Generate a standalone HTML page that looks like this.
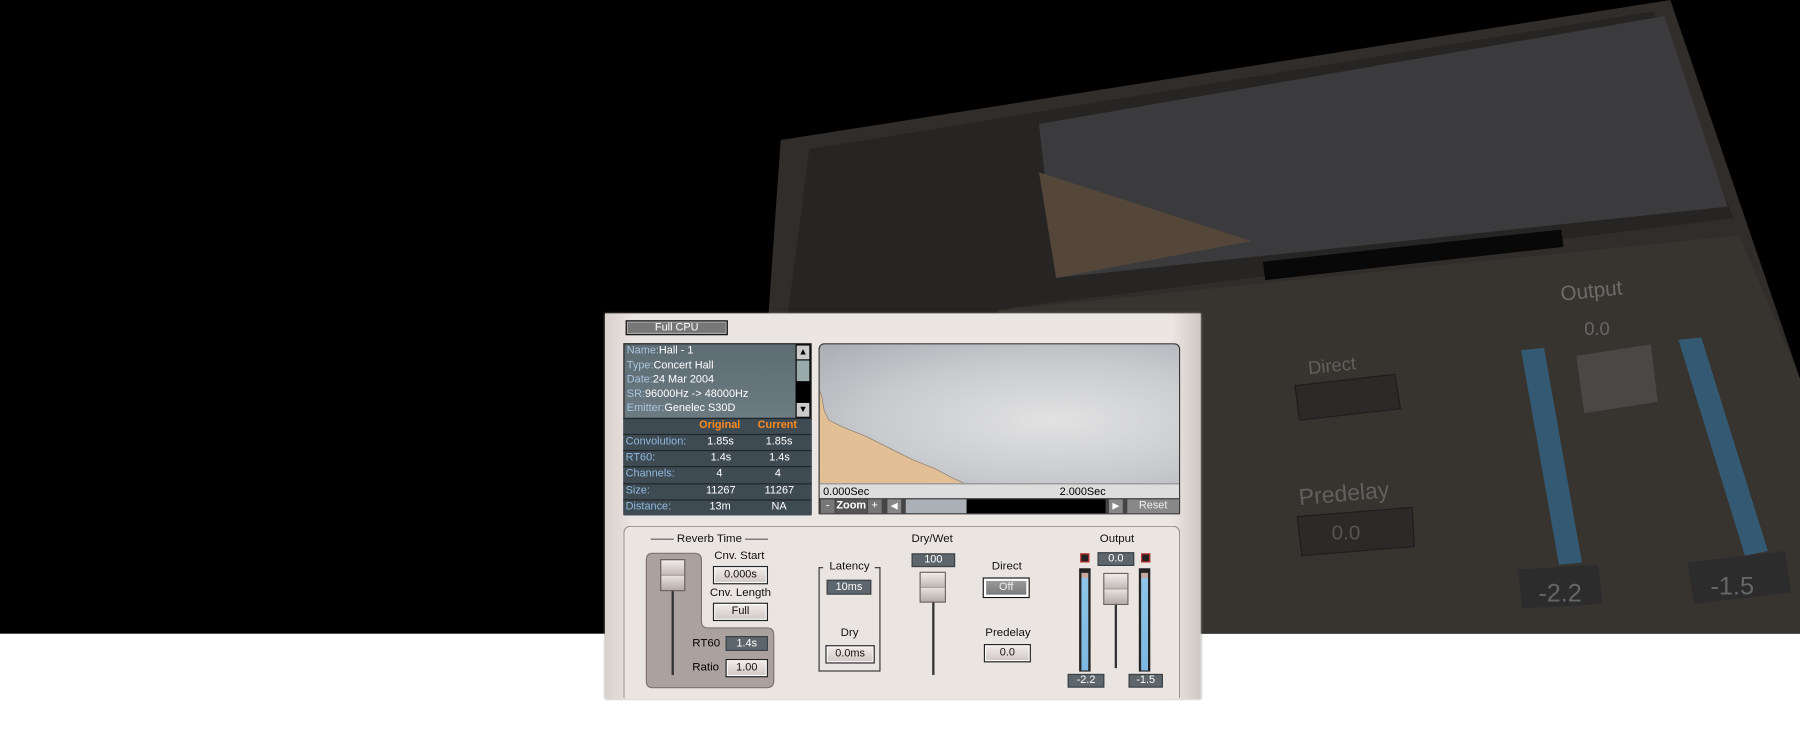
<!DOCTYPE html>
<html><head><meta charset="utf-8"><style>
html,body{margin:0;padding:0;width:1800px;height:750px;overflow:hidden;background:#fff}
#w{position:absolute;left:0;top:0;width:1568px;height:653px;transform:scale(1.148);transform-origin:0 0;font-family:"Liberation Sans",sans-serif}
.a{position:absolute}
.lbl{position:absolute;font-size:10px;color:#111;white-space:nowrap;transform:translateX(-50%)}
.btn{position:absolute;box-sizing:border-box;border:1px solid #222;background:linear-gradient(#f2ecea,#cfc7c3);font-size:9.5px;text-align:center;color:#111;box-shadow:inset 0 0 0 1px #fff}
.dk{position:absolute;box-sizing:border-box;background:#5d666c;border:1px solid #3a4044;color:#fff;font-size:9.5px;text-align:center}
.hdl{position:absolute;box-sizing:border-box;border:1px solid #6a605c;background:linear-gradient(#f0ebe9,#c3bab6 48%,#8f8682 50%,#e6e0dd 53%,#b5aca8);}
.trk{position:absolute;width:2px;background:#333}
.row{position:absolute;left:0;width:164px;height:13px;background:#3f4b53;border-top:1px solid #1f2529;font-size:9.5px;color:#fff}
.row span{position:absolute;top:0}
.row .k{left:2px;color:#8fb8de}
</style></head><body><div id="w">
<div class="a" style="left:0;top:0;width:1568px;height:552px;background:#000"></div>
<svg class="a" style="left:0;top:0" width="1568" height="552">
<polygon points="680,122 1455,0 1568,330 1568,552 650,552" fill="#302d2a"/>
<polygon points="705,130 1440,10 1510,190 880,268 850,552 650,552" fill="#262523"/>
<polygon points="905,108 1450,14 1505,180 920,242" fill="#3b3b3d"/>
<polygon points="905,150 1090,210 920,242" fill="#54473a"/>
<polygon points="1100,228 1360,200 1362,215 1102,244" fill="#080808"/>
<polygon points="870,270 1515,205 1568,330 1568,552 850,552" fill="#37342f"/>
<polygon points="1325,305 1345,303 1378,490 1358,492" fill="#345a73"/>
<polygon points="1462,296 1482,294 1540,480 1520,484" fill="#345a73"/>
<polygon points="1373,310 1438,300 1444,350 1380,360" fill="#4a4845"/>
<polygon points="1128,336 1215,326 1220,356 1132,366" fill="#2c2a28" stroke="#1e1d1c"/>
<polygon points="1130,450 1230,442 1232,476 1134,484" fill="#2c2a28" stroke="#1e1d1c"/>
<polygon points="1322,496 1392,492 1396,526 1326,530" fill="#2c2c2c"/>
<polygon points="1470,490 1555,480 1560,516 1476,526" fill="#2c2c2c"/>
<text x="1360" y="262" fill="#6e6b68" font-size="18" font-family="Liberation Sans" transform="rotate(-6 1360 262)">Output</text>
<text x="1140" y="326" fill="#625f5c" font-size="16" font-family="Liberation Sans" transform="rotate(-6 1140 326)">Direct</text>
<text x="1132" y="440" fill="#625f5c" font-size="20" font-family="Liberation Sans" transform="rotate(-5 1132 440)">Predelay</text>
<text x="1160" y="470" fill="#555" font-size="18" font-family="Liberation Sans">0.0</text>
<text x="1340" y="524" fill="#666" font-size="22" font-family="Liberation Sans">-2.2</text>
<text x="1490" y="518" fill="#666" font-size="22" font-family="Liberation Sans">-1.5</text>
<text x="1380" y="292" fill="#666" font-size="16" font-family="Liberation Sans">0.0</text>
</svg>

<!-- plugin -->
<div class="a" style="left:527px;top:273px;width:519px;height:336px;background:linear-gradient(90deg,#d8d0cc,#ece6e3 5%,#ece6e3 95%,#d0c8c4);box-shadow:0 0 2px #999"></div>
<div class="a" style="left:545px;top:279px;width:89px;height:13px;box-sizing:border-box;border:1px solid #111;background:#777;box-shadow:inset 0 0 0 1px #aaa;color:#fff;font-size:9.5px;text-align:center;line-height:11px">Full CPU</div>

<div class="a" style="left:543px;top:299px;width:164px;height:149px;background:#3f4b53;border:1px solid #222;box-sizing:border-box"></div>
<div class="a" style="left:544px;top:300px;width:148px;height:64px;background:linear-gradient(#5d6b73,#6c7a82);font-size:9.5px;color:#fff;line-height:12.6px;padding-left:2px">
<div><span style="color:#a9c6e0">Name:</span>Hall - 1</div>
<div><span style="color:#a9c6e0">Type:</span>Concert Hall</div>
<div><span style="color:#a9c6e0">Date:</span>24 Mar 2004</div>
<div><span style="color:#a9c6e0">SR:</span>96000Hz -&gt; 48000Hz</div>
<div><span style="color:#a9c6e0">Emitter:</span>Genelec S30D</div></div>
<div class="a" style="left:693px;top:300px;width:13px;height:64px;background:#000"></div>
<div class="a" style="left:694px;top:301px;width:11px;height:12px;background:#ccc;font-size:8px;text-align:center;line-height:12px">▲</div>
<div class="a" style="left:694px;top:314px;width:11px;height:18px;background:#9aa"></div>
<div class="a" style="left:694px;top:351px;width:11px;height:12px;background:#ccc;font-size:8px;text-align:center;line-height:12px">▼</div>
<div class="a" style="left:543px;top:364px;width:164px">
<div class="row" style="top:0;font-weight:bold"><span style="left:66px;color:#ff8a1e">Original</span><span style="left:117px;color:#ff8a1e">Current</span></div>
<div class="row" style="top:14px"><span class="k">Convolution:</span><span style="left:73px">1.85s</span><span style="left:124px">1.85s</span></div>
<div class="row" style="top:28px"><span class="k">RT60:</span><span style="left:76px">1.4s</span><span style="left:127px">1.4s</span></div>
<div class="row" style="top:42px"><span class="k">Channels:</span><span style="left:81px">4</span><span style="left:132px">4</span></div>
<div class="row" style="top:57px"><span class="k">Size:</span><span style="left:72px">11267</span><span style="left:123px">11267</span></div>
<div class="row" style="top:71px"><span class="k">Distance:</span><span style="left:75px">13m</span><span style="left:129px">NA</span></div></div>

<div class="a" style="left:713px;top:299px;width:315px;height:149px;background:#3a3a3a;border-radius:5px 5px 0 0"></div>
<div class="a" style="left:714px;top:300px;width:313px;height:121px;border-radius:4px 4px 0 0;background:radial-gradient(ellipse at 65% 55%,#e2e2e2,#c8cacd 55%,#a9adb2)"></div>
<svg class="a" style="left:714px;top:300px" width="313" height="121"><polygon points="0,121 0,40 2,46 4,58 8,66 20,72 40,80 60,90 80,100 100,108 115,116 126,121" fill="#e2bf95" stroke="#8a7c6e" stroke-width=".6"/></svg>
<div class="a" style="left:714px;top:421px;width:313px;height:12px;background:#ddd;border-top:1px solid #999;font-size:9.5px;line-height:13px"><span class="a" style="left:3px">0.000Sec</span><span class="a" style="left:209px">2.000Sec</span></div>
<div class="a" style="left:714px;top:434px;width:313px;height:14px;background:#444"></div>
<div class="a" style="left:715px;top:435px;width:12px;height:12px;background:#777;color:#fff;font-size:10px;text-align:center;line-height:11px">-</div>
<div class="a" style="left:728px;top:435px;width:27px;height:12px;background:#555;color:#fff;font-size:9.5px;text-align:center;line-height:12px;font-weight:bold">Zoom</div>
<div class="a" style="left:756px;top:435px;width:12px;height:12px;background:#777;color:#fff;font-size:10px;text-align:center;line-height:11px">+</div>
<div class="a" style="left:773px;top:435px;width:12px;height:12px;background:#888;color:#fff;font-size:8px;text-align:center;line-height:12px">◀</div>
<div class="a" style="left:789px;top:435px;width:53px;height:12px;background:#aab0b6"></div>
<div class="a" style="left:842px;top:435px;width:121px;height:12px;background:#000"></div>
<div class="a" style="left:966px;top:435px;width:12px;height:12px;background:#888;color:#fff;font-size:8px;text-align:center;line-height:12px">▶</div>
<div class="a" style="left:982px;top:435px;width:45px;height:12px;background:#888;color:#eee;font-size:9.5px;text-align:center;line-height:12px">Reset</div>

<!-- lower -->
<div class="a" style="left:543px;top:458px;width:485px;height:150px;box-sizing:border-box;border:1px solid #9a918d;border-bottom:none;border-radius:6px 6px 0 0;background:#ebe5e2"></div>
<div class="lbl" style="left:618px;top:464px">&#8212;&#8212; Reverb Time &#8212;&#8212;</div>
<svg class="a" style="left:562px;top:481px" width="114" height="120"><path d="M6,1 H43 Q49,1 49,7 V60 Q49,66 55,66 H106 Q112,66 112,72 V112 Q112,118 106,118 H6 Q1,118 1,112 V7 Q1,1 6,1Z" fill="#aba29f" stroke="#7d7471"/></svg>
<div class="trk" style="left:585px;top:512px;height:76px"></div>
<div class="hdl" style="left:575px;top:487px;width:22px;height:28px"></div>
<div class="lbl" style="left:644px;top:479px">Cnv. Start</div>
<div class="btn" style="left:621px;top:493px;width:48px;height:16px;line-height:14px">0.000s</div>
<div class="lbl" style="left:645px;top:511px">Cnv. Length</div>
<div class="btn" style="left:621px;top:525px;width:48px;height:16px;line-height:14px">Full</div>
<div class="a" style="left:603px;top:555px;font-size:10px">RT60</div>
<div class="dk" style="left:632px;top:554px;width:37px;height:13px;line-height:11px">1.4s</div>
<div class="a" style="left:603px;top:576px;font-size:10px">Ratio</div>
<div class="btn" style="left:632px;top:574px;width:37px;height:16px;line-height:14px">1.00</div>

<div class="a" style="left:713px;top:494px;width:54px;height:91px;box-sizing:border-box;border:1px solid #333;border-top:none"></div>
<div class="a" style="left:713px;top:494px;width:4px;height:1px;background:#333"></div><div class="a" style="left:762px;top:494px;width:5px;height:1px;background:#333"></div>
<div class="lbl" style="left:740px;top:488px">Latency</div>
<div class="dk" style="left:720px;top:505px;width:39px;height:13px;line-height:11px">10ms</div>
<div class="lbl" style="left:740px;top:546px">Dry</div>
<div class="btn" style="left:719px;top:562px;width:43px;height:16px;line-height:14px">0.0ms</div>

<div class="lbl" style="left:812px;top:464px">Dry/Wet</div>
<div class="dk" style="left:794px;top:482px;width:38px;height:12px;line-height:10px">100</div>
<div class="trk" style="left:812px;top:522px;height:66px"></div>
<div class="hdl" style="left:801px;top:498px;width:23px;height:27px"></div>
<div class="lbl" style="left:877px;top:488px">Direct</div>
<div class="a" style="left:856px;top:503px;width:41px;height:18px;box-sizing:border-box;border:1px solid #111;background:#fff;padding:2px"><div style="background:linear-gradient(#9a9a9a,#7a7a7a);height:12px;color:#eee;font-size:9.5px;text-align:center;line-height:12px">Off</div></div>
<div class="lbl" style="left:878px;top:546px">Predelay</div>
<div class="btn" style="left:857px;top:561px;width:41px;height:16px;line-height:14px">0.0</div>

<div class="lbl" style="left:973px;top:464px">Output</div>
<div class="a" style="left:941px;top:482px;width:8px;height:8px;background:#222;border:1px solid #c33;box-sizing:border-box"></div>
<div class="a" style="left:994px;top:482px;width:8px;height:8px;background:#222;border:1px solid #c33;box-sizing:border-box"></div>
<div class="dk" style="left:956px;top:481px;width:32px;height:12px;line-height:10px">0.0</div>
<div class="a" style="left:940px;top:495px;width:10px;height:90px;background:#222"><div style="margin:4px 2px 1px;height:85px;background:linear-gradient(#c8a8a0 0,#c8a8a0 4px,#8ec4e8 5px,#7cb8e2)"></div></div>
<div class="a" style="left:992px;top:495px;width:10px;height:90px;background:#222"><div style="margin:4px 2px 1px;height:85px;background:linear-gradient(#c8a8a0 0,#c8a8a0 4px,#8ec4e8 5px,#7cb8e2)"></div></div>
<div class="trk" style="left:971px;top:525px;height:57px"></div>
<div class="hdl" style="left:961px;top:499px;width:22px;height:28px"></div>
<div class="dk" style="left:930px;top:587px;width:32px;height:12px;line-height:10px">-2.2</div>
<div class="dk" style="left:983px;top:587px;width:30px;height:12px;line-height:10px">-1.5</div>
</div></body></html>
